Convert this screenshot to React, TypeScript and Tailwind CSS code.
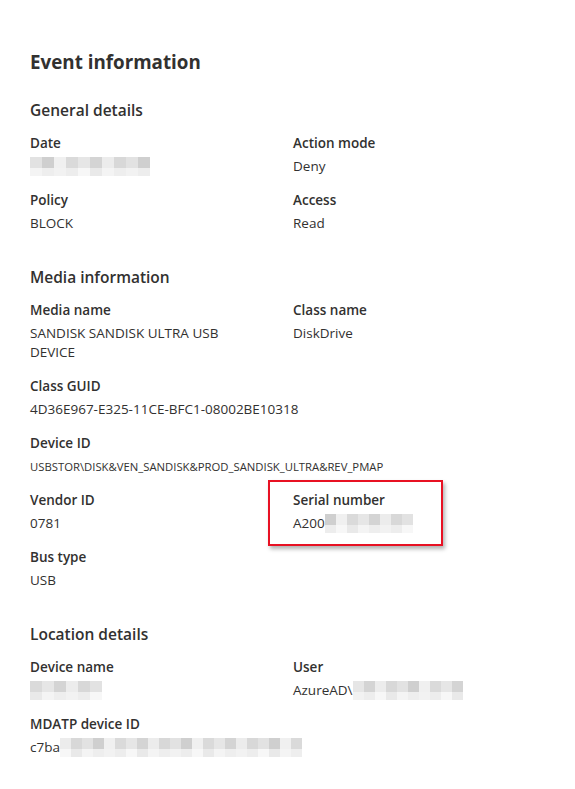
import type { ReactNode } from "react";

// pixelated block used in place of hidden values
const shades = ["#d4d4d4", "#e2e2e2", "#dadada", "#ececec", "#cfcfcf", "#e6e6e6", "#d8d8d8", "#f0f0f0"];
const lightShades = ["#eeeeee", "#f4f4f4", "#e9e9e9", "#f7f7f7", "#ededed", "#f2f2f2"];

function Masked({ cols, cell = 12, offset = 0 }: { cols: number; cell?: number; offset?: number }) {
  return (
    <span className="inline-flex flex-col align-middle">
      <span className="flex">
        {Array.from({ length: cols }).map((_, i) => (
          <span
            key={i}
            className="block h-[11px]"
            style={{ width: cell, background: shades[(i * 3 + offset) % shades.length] }}
          />
        ))}
      </span>
      <span className="flex">
        {Array.from({ length: cols }).map((_, i) => (
          <span
            key={i}
            className="block h-[8px]"
            style={{ width: cell, background: lightShades[(i * 5 + offset) % lightShades.length] }}
          />
        ))}
      </span>
    </span>
  );
}

function Field({ label, children, small }: { label: string; children: ReactNode; small?: boolean }) {
  return (
    <div>
      <div className="text-[13.5px] leading-[20px] font-semibold text-[#323130]">{label}</div>
      <div
        className={
          "mt-[4px] text-[#323130] " +
          (small ? "text-[11.3px] leading-[19px]" : "text-[13.5px] leading-[19px]")
        }
      >
        {children}
      </div>
    </div>
  );
}

// hidden value, kept to one text line in height
function HiddenValue({ prefix, cols, cell, offset }: { prefix?: string; cols: number; cell?: number; offset?: number }) {
  return (
    <span className="flex items-center h-[19px] overflow-visible">
      {prefix}
      <Masked cols={cols} cell={cell} offset={offset} />
    </span>
  );
}

function Row({ children }: { children: ReactNode }) {
  return <div className="grid grid-cols-[263px_1fr] mt-[14px] first:mt-0">{children}</div>;
}

function Section({ title, className, children }: { title: string; className: string; children: ReactNode }) {
  return (
    <section className={className}>
      <h3 className="text-[15.5px] leading-[22px] font-semibold text-[#323130]">{title}</h3>
      <div className="mt-[12px]">{children}</div>
    </section>
  );
}

export default function App() {
  return (
    <div
      className="w-[575px] h-[789px] bg-white pl-[30px] pt-[48px] overflow-hidden"
      style={{ fontFamily: "'Open Sans', 'Noto Sans', sans-serif" }}
    >
      <h2 className="text-[18.8px] leading-[28px] font-bold text-[#323130]">Event information</h2>

      <Section title="General details" className="mt-[23px]">
        <Row>
          <Field label="Date">
            <HiddenValue cols={10} offset={1} />
          </Field>
          <Field label="Action mode">Deny</Field>
        </Row>
        <Row>
          <Field label="Policy">BLOCK</Field>
          <Field label="Access">Read</Field>
        </Row>
      </Section>

      <Section title="Media information" className="mt-[33px]">
        <Row>
          <div className="w-[225px]">
            <Field label="Media name">SANDISK SANDISK ULTRA USB DEVICE</Field>
          </div>
          <Field label="Class name">DiskDrive</Field>
        </Row>
        <div className="mt-[14px]">
          <Field label="Class GUID">4D36E967-E325-11CE-BFC1-08002BE10318</Field>
        </div>
        <div className="mt-[14px]">
          <Field label="Device ID" small>
            USBSTOR\DISK&amp;VEN_SANDISK&amp;PROD_SANDISK_ULTRA&amp;REV_PMAP
          </Field>
        </div>
        <Row>
          <Field label="Vendor ID">0781</Field>
          <div className="relative">
            <div className="absolute left-[-25px] top-[-10px] w-[175px] h-[66px] border-2 border-[#e81123] shadow-[2px_3px_4px_rgba(0,0,0,0.3)]" />
            <Field label="Serial number">
              <HiddenValue prefix="A200" cols={8} cell={11} offset={4} />
            </Field>
          </div>
        </Row>
        <Row>
          <Field label="Bus type">USB</Field>
        </Row>
      </Section>

      <Section title="Location details" className="mt-[33px]">
        <Row>
          <Field label="Device name">
            <HiddenValue cols={6} cell={12} offset={2} />
          </Field>
          <Field label="User">
            <HiddenValue prefix="AzureAD\" cols={10} cell={11} offset={5} />
          </Field>
        </Row>
        <Row>
          <Field label="MDATP device ID">
            <HiddenValue prefix="c7ba" cols={22} cell={11} offset={3} />
          </Field>
        </Row>
      </Section>
    </div>
  );
}
